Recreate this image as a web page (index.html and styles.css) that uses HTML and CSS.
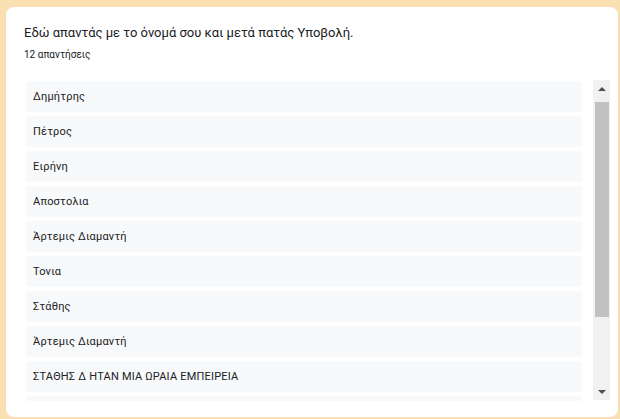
FILE: index.html
```html
<!DOCTYPE html>
<html lang="el">

<head>
    <meta charset="UTF-8">
    <meta name="viewport" content="width=device-width, initial-scale=1.0">
    <title>Απαντήσεις</title>
    <link rel="stylesheet" href="styles.css">
</head>

<body>
    <div class="card">
        <div class="question">Εδώ απαντάς με το όνομά σου και μετά πατάς Υποβολή.</div>
        <div class="count">12 απαντήσεις</div>

        <div class="answers">
            <div class="answer-list">
                <div class="answer">Δημήτρης</div>
                <div class="answer">Πέτρος</div>
                <div class="answer">Ειρήνη</div>
                <div class="answer">Αποστολια</div>
                <div class="answer">Άρτεμις Διαμαντή</div>
                <div class="answer">Τονια</div>
                <div class="answer">Στάθης</div>
                <div class="answer">Άρτεμις Διαμαντή</div>
                <div class="answer">ΣΤΑΘΗΣ Δ ΗΤΑΝ ΜΙΑ ΩΡΑΙΑ ΕΜΠΕΙΡΕΙΑ</div>
                <div class="answer">Μαρία</div>
                <div class="answer">Γιώργος</div>
                <div class="answer">Ελένη</div>
            </div>
            <div class="scrollbar">
                <div class="scroll-btn"><span class="arrow-up"></span></div>
                <div class="scroll-track">
                    <div class="scroll-thumb"></div>
                </div>
                <div class="scroll-btn"><span class="arrow-down"></span></div>
            </div>
        </div>
    </div>
</body>

</html>
```

FILE: styles.css
```css
html,
body {
    height: 100%;
}

body {
    margin: 0;
    background: #f9dfb1;
    font-family: Roboto, Arial, sans-serif;
    color: #202124;
    overflow: hidden;
}

.card {
    margin: 7px 2px 0 6px;
    height: 410px;
    box-sizing: border-box;
    background: #fff;
    border-radius: 8px;
    padding: 17px 8px 0 18px;
}

.question {
    font-size: 13px;
    line-height: 18px;
}

.count {
    font-size: 10px;
    line-height: 14px;
    margin-top: 6px;
}

.answers {
    display: flex;
    align-items: flex-start;
    margin-top: 18px;
    margin-left: 2px;
}

.answer-list {
    flex: 1;
    height: 320px;
    margin-top: 1px;
    margin-right: 11px;
    overflow-y: auto;
    scrollbar-width: none;
    display: flex;
    flex-direction: column;
    gap: 4px;
}

.answer {
    flex: none;
    height: 31px;
    line-height: 31px;
    padding-left: 7px;
    background: #f8f9fa;
    border-radius: 2px;
    font-size: 11px;
    letter-spacing: 0.2px;
}

.scrollbar {
    width: 17px;
    height: 320px;
    background: #f1f1f1;
    display: flex;
    flex-direction: column;
}

.scroll-btn {
    height: 17px;
    display: flex;
    align-items: center;
    justify-content: center;
}

.arrow-up,
.arrow-down {
    width: 0;
    height: 0;
    border-left: 4px solid transparent;
    border-right: 4px solid transparent;
}

.arrow-up {
    border-bottom: 4px solid #505050;
}

.arrow-down {
    border-top: 4px solid #505050;
}

.scroll-track {
    flex: 1;
}

.scroll-thumb {
    margin: 5px 1px 0 2px;
    height: 215px;
    background: #c1c1c1;
}
```
